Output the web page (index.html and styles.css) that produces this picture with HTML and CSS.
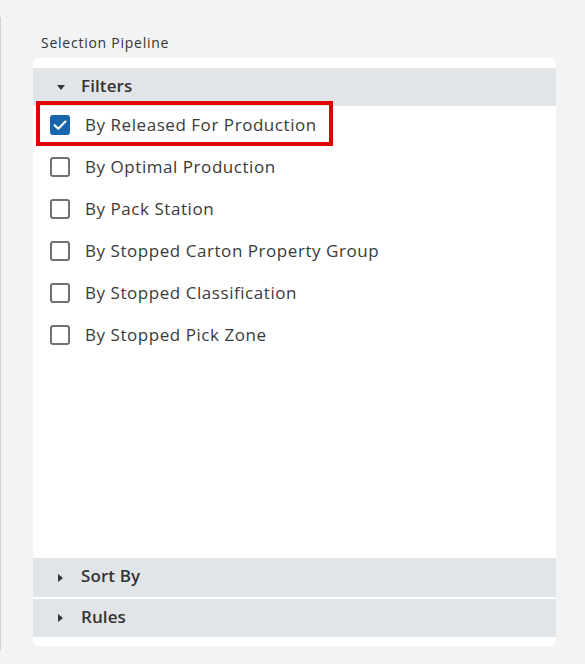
FILE: index.html
```html
<!DOCTYPE html>
<html lang="en">
<head>
<meta charset="utf-8">
<title>Selection Pipeline</title>
<link rel="stylesheet" href="styles.css">
</head>
<body>
<div class="panel">
  <div class="label">Selection Pipeline</div>
  <div class="card">
    <div class="section-head">
      <svg class="caret" width="8" height="5" viewBox="0 0 8 5"><path d="M0 0H8L4 5Z" fill="#333"/></svg>
      <span>Filters</span>
    </div>
    <div class="list">
      <label class="row highlighted">
        <span class="box checked">
          <svg width="20" height="20" viewBox="0 0 20 20"><path d="M4.6 10.2 8.3 13.8 15.4 6.6" fill="none" stroke="#fff" stroke-width="2.2" stroke-linecap="round" stroke-linejoin="round"/></svg>
        </span>
        <span class="text">By Released For Production</span>
        <span class="mark"></span>
      </label>
      <label class="row"><span class="box"></span><span class="text">By Optimal Production</span></label>
      <label class="row"><span class="box"></span><span class="text">By Pack Station</span></label>
      <label class="row"><span class="box"></span><span class="text">By Stopped Carton Property Group</span></label>
      <label class="row"><span class="box"></span><span class="text">By Stopped Classification</span></label>
      <label class="row"><span class="box"></span><span class="text">By Stopped Pick Zone</span></label>
    </div>
    <div class="section-head collapsed first">
      <svg class="caret-r" width="5" height="8" viewBox="0 0 5 8"><path d="M0 0V8L5 4Z" fill="#333"/></svg>
      <span>Sort By</span>
    </div>
    <div class="section-head collapsed">
      <svg class="caret-r" width="5" height="8" viewBox="0 0 5 8"><path d="M0 0V8L5 4Z" fill="#333"/></svg>
      <span>Rules</span>
    </div>
  </div>
</div>
</body>
</html>
```
FILE: styles.css
```css
html, body {
  margin: 0;
  padding: 0;
  background: #f2f3f5;
  font-family: "Open Sans", "Liberation Sans", sans-serif;
  color: #333;
}

.panel {
  margin-top: 17px;
  height: 618px;
  padding-top: 16px;
  border-left: 1px solid #cfd1d4;
  padding-left: 32px;
  display: flex;
  flex-direction: column;
}

.label {
  font-size: 14px;
  line-height: 20px;
  padding-left: 8px;
  margin-bottom: 5px;
  color: #333;
  letter-spacing: 0.75px;
}

.card {
  width: 523px;
  height: 588px;
  box-sizing: border-box;
  background: #fff;
  border-radius: 5px;
  padding: 10px 0 9px;
  display: flex;
  flex-direction: column;
}

.section-head {
  height: 38px;
  background: #e2e5e8;
  display: flex;
  align-items: center;
  font-size: 17px;
  font-weight: 600;
  letter-spacing: 0.1px;
  color: #333;
  flex-shrink: 0;
}

.section-head span {
  line-height: 20px;
  padding-bottom: 3px;
}

.section-head .caret {
  margin-left: 24px;
  margin-right: 16px;
}

.section-head .caret-r {
  margin-left: 25px;
  margin-right: 18px;
}

.section-head.collapsed.first {
  height: 39px;
  margin-bottom: 2px;
}

.list {
  flex: 1;
  display: flex;
  flex-direction: column;
  gap: 4px;
}

.row {
  position: relative;
  height: 38px;
  display: flex;
  align-items: center;
  padding-left: 17px;
  font-size: 17px;
  letter-spacing: 0.55px;
  color: #3a3a3a;
}

.row .text {
  line-height: 20px;
  padding-bottom: 1px;
}

.box {
  width: 20px;
  height: 20px;
  box-sizing: border-box;
  border: 2px solid #6f6f6f;
  border-radius: 3px;
  margin-right: 15px;
  flex-shrink: 0;
}

.box.checked {
  border: none;
  background: #1865ad;
}

.box svg {
  display: block;
}

.mark {
  position: absolute;
  left: 3px;
  top: -5px;
  width: 297px;
  height: 45px;
  box-sizing: border-box;
  border: 4px solid #e30000;
}
```
